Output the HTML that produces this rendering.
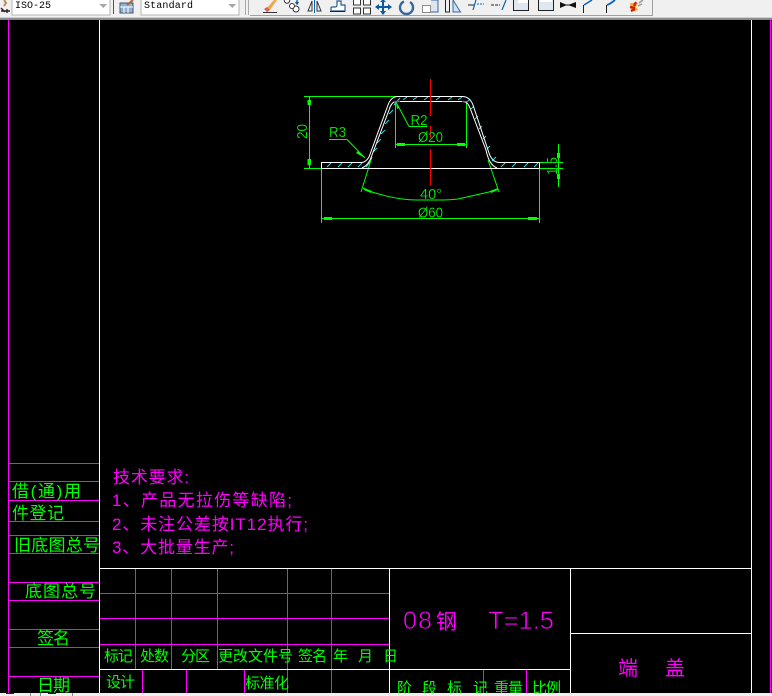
<!DOCTYPE html>
<html><head><meta charset="utf-8"><style>
html,body{margin:0;padding:0;background:#000;width:772px;height:696px;overflow:hidden}
svg{display:block}
.cn{font-family:"Liberation Sans","WenQuanYi Zen Hei","Noto Sans CJK SC",sans-serif}
.mono{font-family:"Liberation Mono",monospace;font-size:10px;fill:#000}
.g{fill:#0f0}.m{fill:#f0f}
.d{font-family:"Liberation Sans",sans-serif;font-size:15px;fill:#0f0;stroke:#000;stroke-width:.2}
.big{font-family:"Liberation Sans","WenQuanYi Zen Hei",sans-serif;font-size:25px;fill:#f0f;stroke:#000;stroke-width:.7}
</style></head><body>
<svg width="772" height="696" viewBox="0 0 772 696" shape-rendering="crispEdges">
<rect width="772" height="696" fill="#000"/>
<!-- toolbar -->
<rect width="772" height="18" fill="#f0f0f0"/>
<rect y="18" width="772" height="2" fill="#8a8a8a"/>
<rect x="0" y="17" width="772" height="1" fill="#d0d0d0"/>
<rect x="250" y="15" width="403" height="1" fill="#a0a0a0"/>
<rect x="652" y="0" width="1" height="16" fill="#a0a0a0"/>
<rect x="12" y="-1" width="98" height="16" fill="#fff" stroke="#b5b5b5"/>
<rect x="141" y="-1" width="98" height="16" fill="#fff" stroke="#b5b5b5"/>
<text x="15" y="8" class="mono" textLength="36">ISO-25</text>
<text x="144" y="8" class="mono" textLength="49">Standard</text>
<path d="M99 4h8l-4 4z" fill="#a8a8a8"/><path d="M228 4h8l-4 4z" fill="#a8a8a8"/>
<rect x="113" y="0" width="1" height="14" fill="#555"/>
<rect x="245" y="0" width="1" height="15" fill="#aaa"/><rect x="248" y="0" width="1" height="15" fill="#aaa"/>
<g shape-rendering="auto">
<path d="M1 8l4 4M1 11h9M7 9v4" stroke="#222" stroke-width="1.4" fill="none"/><path d="M4 0l2 3-2 3" stroke="#b85" stroke-width="2" fill="none"/>
<rect x="120" y="3" width="13" height="10" fill="#8fb0d8" stroke="#456"/><path d="M120 7h13M124 7v6M128 7v6" stroke="#fff"/><path d="M127 5l6-5" stroke="#a63" stroke-width="2"/>
<path d="M265 10l9-10h3l-7 10z" fill="#f0a850"/><path d="M264 9l3-2 3 3-3 2z" fill="#d86060"/><path d="M263 12.500h14" stroke="#333"/>
<circle cx="287" cy="0.500" r="2.700" fill="#fff" stroke="#333"/><circle cx="296" cy="9" r="3" fill="#fff" stroke="#333"/><circle cx="292" cy="6" r="2.500" fill="#fff" stroke="#333"/><path d="M297 0v3M295.500 2l1.500 2 1.500-2" stroke="#0a5aa0" fill="none" stroke-width="1.300"/>
<path d="M312 1v10h-4z" fill="none" stroke="#333"/><path d="M317 1v10h4z" fill="#e8eef4" stroke="#333"/><path d="M314.500 0v13" stroke="#0a64b4"/>
<path d="M331 11v-3q0-1 1-1h3q2 0 2-2v-4h4v4h4v6z" fill="#fff" stroke="#2a5a90" stroke-width="1.200"/><path d="M330 11.500h15" stroke="#222"/>
<path d="M353.500 0v5h7v-5M363.500 0v5h7v-5M353.500 8h7v6h-7zM363.500 8h7v6h-7z" fill="#fff" stroke="#333"/>
<path d="M376 7h15M383 0v14" stroke="#0a5aa0" stroke-width="2"/><path d="M375 7l4-3v6zM392 7l-4-3v6zM383 -1l-3 3h6zM383 15l-3-4h6z" fill="#0a5aa0"/>
<path d="M404 1.500a6.500 6.500 0 1 0 6 .5" fill="none" stroke="#38689c" stroke-width="2.400"/>
<rect x="422.500" y="5.500" width="8" height="7" fill="#fff" stroke="#222" stroke-dasharray="1 1"/><path d="M431 0h7v12h-7" fill="#dde6f0" stroke="#38689c"/>
<path d="M445.500 0v12h4V0" fill="none" stroke="#222"/><path d="M453 0l7.500 12h-7.500z" fill="#cfe0f0" stroke="#38689c"/>
<path d="M468 5h7" stroke="#222"/><path d="M476 0l-3 10" stroke="#0a64b4" stroke-width="1.200"/><path d="M477 4h7" stroke="#0a64b4" stroke-dasharray="2 1"/>
<path d="M491 5h9" stroke="#222" stroke-dasharray="3 1"/><path d="M506 0l-4 10" stroke="#0a64b4" stroke-width="1.200"/>
<path d="M513.500 0v10.500h15V0" fill="#dfe7f1" stroke="#222"/><path d="M518 0h10v3h-10z" fill="#fff"/>
<path d="M538.500 0v10.500h15V0" fill="#dfe7f1" stroke="#222"/><path d="M540 0h12v2h-12z" fill="#fff"/>
<path d="M560 2l7 3-7 3zM576 2l-8 3 8 3z" fill="#111"/><path d="M560 5h16" stroke="#111"/>
<path d="M583.500 13V5" stroke="#222"/><path d="M584 5l8-5" stroke="#0a64b4" stroke-width="1.500"/>
<path d="M606.500 13V5" stroke="#222"/><path d="M607 5q3-1 8-5" stroke="#0a64b4" stroke-width="1.800" fill="none"/>
<path d="M630 3l8 0-2 4 2 3-7 2z" fill="#f2b020"/><path d="M630 7l5 1M631 11l4-2M636 2l-2 4" stroke="#d01818" stroke-width="2.200"/><path d="M639 3l4-3M638 6l4-2" stroke="#999" stroke-width="1.500"/>
</g>
<!-- frame -->
<g fill="#f0f">
<rect x="8" y="20" width="1" height="673"/>
<rect x="770" y="20" width="1" height="673"/>
<rect x="8" y="463" width="92" height="1"/><rect x="8" y="481" width="92" height="1"/><rect x="8" y="500" width="92" height="1"/><rect x="8" y="521" width="92" height="1"/><rect x="8" y="535" width="92" height="1"/><rect x="8" y="553" width="92" height="1"/><rect x="8" y="582" width="92" height="1"/><rect x="8" y="600" width="92" height="1"/><rect x="8" y="629" width="92" height="1"/><rect x="8" y="647" width="92" height="1"/><rect x="8" y="676" width="92" height="1"/>
<rect x="100" y="593" width="289" height="1"/><rect x="100" y="618" width="289" height="1"/><rect x="100" y="644" width="289" height="1"/>
<rect x="135" y="568" width="1" height="101"/><rect x="171" y="568" width="1" height="101"/><rect x="217" y="568" width="1" height="101"/><rect x="287" y="568" width="1" height="125"/><rect x="331" y="568" width="1" height="125"/>
<rect x="142" y="669" width="1" height="24"/><rect x="186" y="669" width="1" height="24"/><rect x="244" y="669" width="1" height="24"/><rect x="483" y="669" width="1" height="24"/><rect x="526" y="669" width="1" height="24"/>
</g>
<g fill="#fff">
<rect x="99" y="20" width="1" height="673"/><rect x="751" y="20" width="1" height="673"/>
<rect x="100" y="568" width="651" height="1"/><rect x="570" y="633" width="181" height="1"/><rect x="100" y="669" width="470" height="1"/>
<rect x="389" y="568" width="1" height="125"/><rect x="570" y="568" width="1" height="125"/>
</g>
<!-- left texts -->
<g class="cn g" font-size="17">
<text x="12" y="497" textLength="69">借(通)用</text>
<text x="12" y="519" textLength="52">件登记</text>
<text x="14" y="551" textLength="86">旧底图总号</text>
<text x="25" y="597" textLength="71">底图总号</text>
<text x="37" y="644" textLength="33">签名</text>
<text x="37" y="691" textLength="33">日期</text>
<g font-size="15">
<text x="104" y="661" textLength="29">标记</text>
<text x="140" y="661" textLength="29">处数</text>
<text x="181" y="661" textLength="29">分区</text>
<text x="218" y="661" textLength="75">更改文件号</text>
<text x="298" y="661" textLength="29">签名</text>
<text x="333" y="661">年</text>
<text x="358" y="661">月</text>
<text x="383" y="661">日</text>
<text x="106" y="687" textLength="29">设计</text>
<text x="245" y="688" textLength="44">标准化</text>
<text x="397" y="693">阶</text>
<text x="422" y="693">段</text>
<text x="447" y="693">标</text>
<text x="473" y="693">记</text>
<text x="494" y="693" textLength="29">重量</text>
<text x="532" y="693" textLength="29">比例</text>
</g>
</g>
<g class="cn m" font-size="17">
<text x="113" y="483" textLength="76">技术要求:</text>
<text x="112" y="506" textLength="180">1、产品无拉伤等缺陷;</text>
<text x="112" y="530" textLength="196">2、未注公差按IT12执行;</text>
<text x="112" y="553" textLength="122">3、大批量生产;</text>
<text x="618" y="675" font-size="20">端</text>
<text x="665" y="675" font-size="20">盖</text>
</g>
<text class="big" x="403" y="629" textLength="29">08</text>
<text x="436" y="629" class="cn m" font-size="21">钢</text>
<text class="big" x="488" y="629" textLength="66" lengthAdjust="spacingAndGlyphs">T=1.5</text>
<!-- drawing -->
<g shape-rendering="auto" fill="none">
<g stroke="#26e0e8" stroke-width="1">
<path d="M327 167l4-4M338 167l4-4M348 167l4-4M358 167l4-4M366 167l5-6M373 152l4-4M377 143l4-4M381 134l4-4M385 124l4-4M389 114l4-4M394 105l6-7M403 100l4-3M413 100l4-3M424 100l4-3M436 100l4-3M448 100l4-3M458 100l4-3"/>
<path d="M467 102l3-3M471 109l3-3M475 119l3-3M479 129l3-3M483 139l3-3M487 149l3-3M492 161l4-4M501 167l4-4M512 167l4-4M524 167l4-4M534 167l4-4"/>
</g>
<g stroke="#0f0" stroke-width="1">
<path d="M304 96.500H396M304 168.500H321M309.500 96V168"/>
<path d="M321.500 168V223M539.500 168V223M321 218.500H539"/>
<path d="M395.500 101V148M466.500 101V148M395 144.500H466"/>
<path d="M329 139.500H347L365 158M409 126.500H427"/><path d="M409 126.500L396 102"/>
<path d="M361 192L372 157M499 192L488 160"/>
<path d="M363 188L372 192Q388 197 402 199Q410 200 417 200H443Q450 200 458 199L489 192L498 189"/>
<path d="M539 162.500H563M539 168.500H563M558.500 144V187"/>
</g>
<g fill="#0f0">
<path d="M307.500 100h3.500v5h-3.500zM307.500 159h3.500v6h-3.500z"/>
<path d="M324 217h8v3h-8zM528 217h9v3h-9zM397 143h8v3h-8zM457 143h8v3h-8z"/>
<path d="M364 188l8 3-1 2-7-3zM490 191l8-3 0 2-7 3zM557 153h3v5h-3zM557 174h3v5h-3z"/>
<path d="M365 158l-7-7-2 2zM396 103l1 6 2-1z"/>
</g>
<g stroke="#fff" stroke-width="1">
<path d="M321.500 168.500V162.500H362Q366 162 369 157L388 105Q391 97 397 96.500H463Q470 97 473 105L489 153Q492 162 499 162.500H539.500V168.500"/>
<path d="M395 101.500H463M395 101.500Q391 103 389 110L372 155Q369 165 362 168M463 101.500Q468 102 470 108L486 150Q489 165 497 168"/>
<path d="M321 168.500H539"/>
</g>
<path d="M394 101.500h6M462 101.500h6" stroke="#f0f" stroke-width="1.200"/>
<path d="M430.500 79V116M430.500 126V138M430.500 149V185" stroke="#f00" stroke-width="1"/>
</g>
<g class="d">
<text x="329" y="137" textLength="17" lengthAdjust="spacingAndGlyphs">R3</text>
<text x="410.500" y="125" textLength="17" lengthAdjust="spacingAndGlyphs">R2</text>
<text x="418" y="142" textLength="25" lengthAdjust="spacingAndGlyphs">Ø20</text>
<text x="420" y="199" textLength="22" lengthAdjust="spacingAndGlyphs">40°</text>
<text x="418" y="217.500" textLength="25" lengthAdjust="spacingAndGlyphs">Ø60</text>
<text transform="translate(307,139) rotate(-90)" textLength="15" lengthAdjust="spacingAndGlyphs">20</text>
<text transform="translate(557,175) rotate(-90)" textLength="18" lengthAdjust="spacingAndGlyphs">1.5</text>
</g>
<!-- bottom strip -->
<rect y="693" width="772" height="3" fill="#f0f0f0"/>
<rect x="6" y="693" width="8" height="1" fill="#222"/><rect x="30" y="693" width="1" height="3" fill="#888"/><rect x="40" y="693" width="1" height="3" fill="#888"/><rect x="48" y="693" width="8" height="1" fill="#222"/><rect x="72" y="693" width="1" height="3" fill="#888"/>
</svg>
</body></html>
